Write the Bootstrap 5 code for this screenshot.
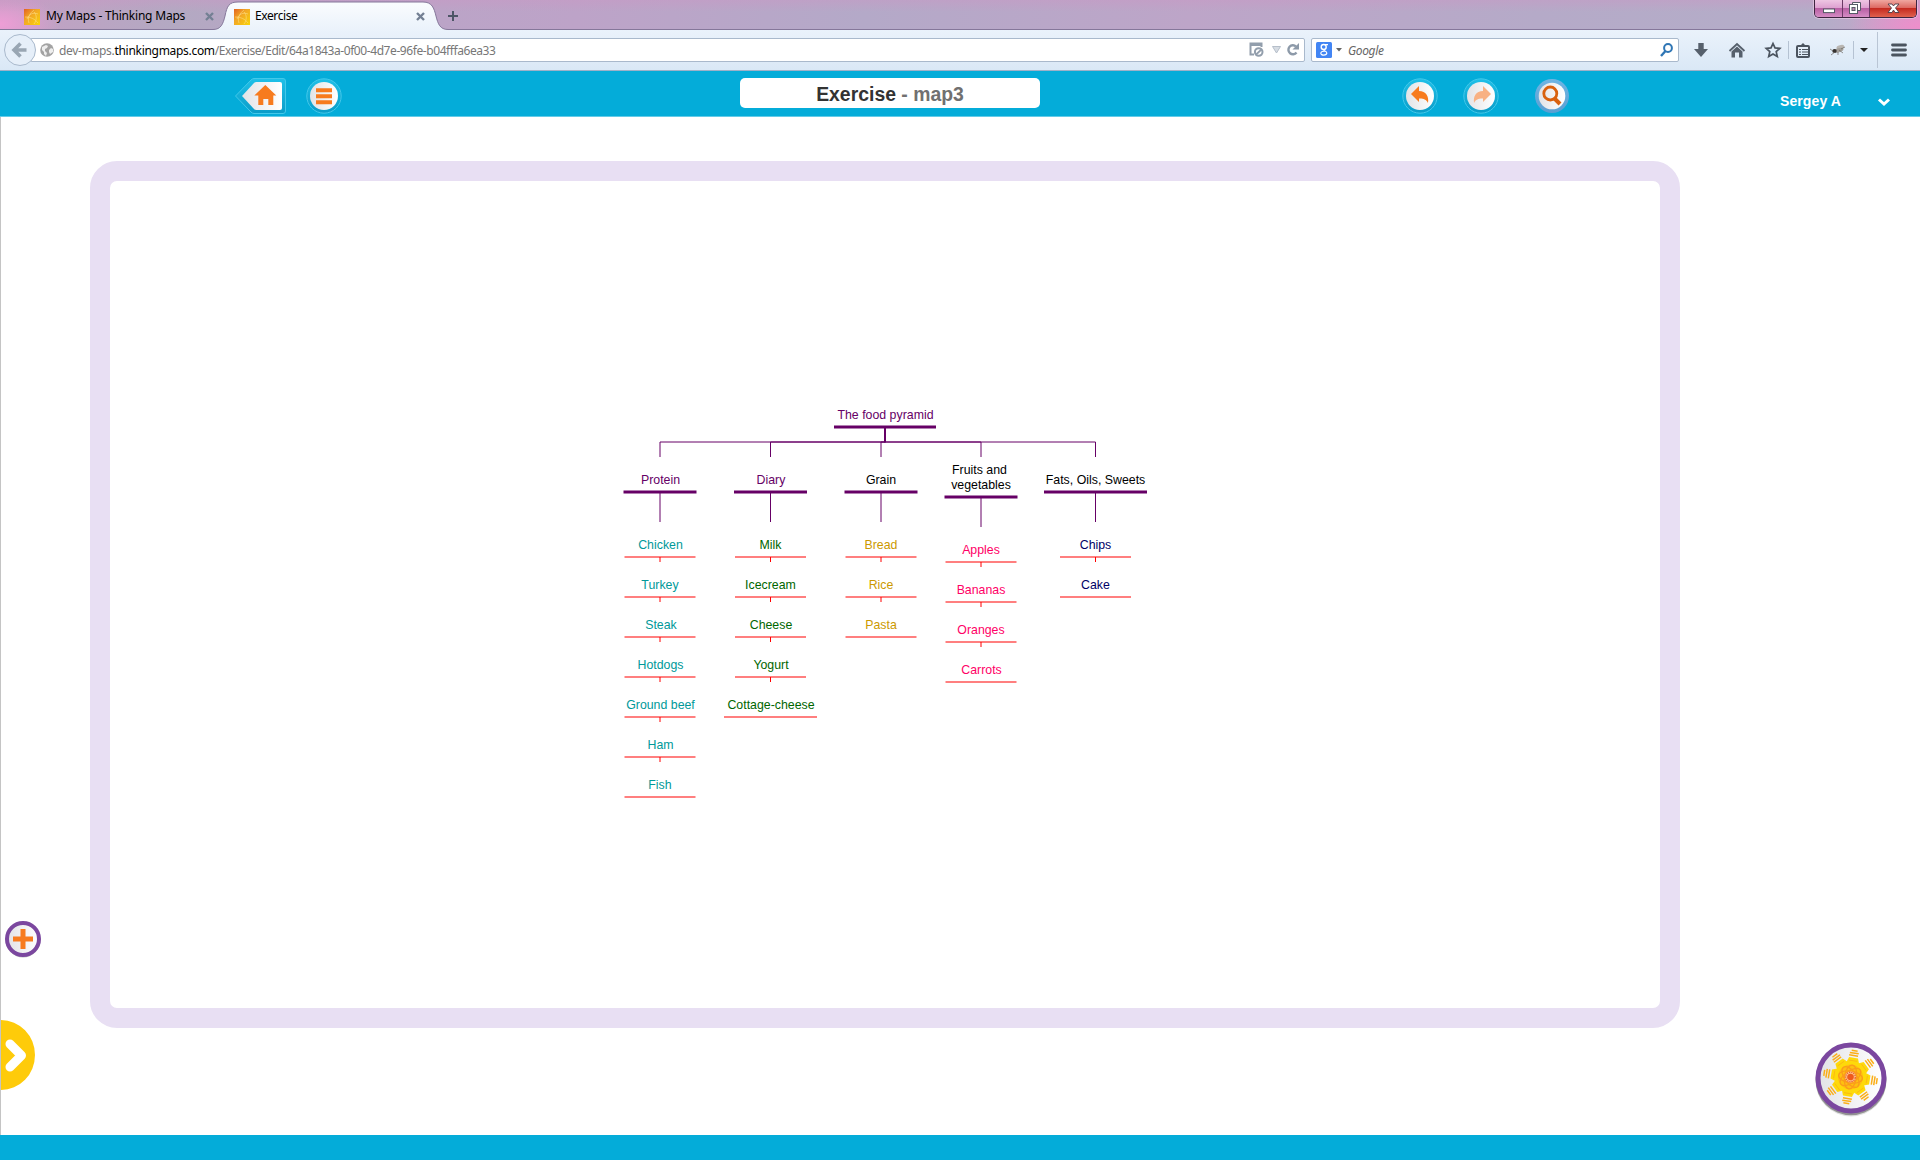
<!DOCTYPE html>
<html lang="en">
<head>
<meta charset="utf-8">
<title>Exercise</title>
<link href="https://cdn.jsdelivr.net/npm/bootstrap@5.3.0/dist/css/bootstrap.min.css" rel="stylesheet">
<script src="https://cdn.jsdelivr.net/npm/bootstrap@5.3.0/dist/js/bootstrap.bundle.min.js"></script>
<style>
body{width:1920px;height:1160px;overflow:hidden;background:#fff;font-family:"Liberation Sans",sans-serif;line-height:1}
svg{display:block;flex:none;overflow:visible}
.ui-font{font-family:"Noto Sans","Open Sans",sans-serif;font-size:12px;white-space:nowrap;color:#000}
.tabstrip{height:30px;background:
 radial-gradient(ellipse 60px 30px at 0 24px,#ee9ed6 0,#ee9ed600 100%),
 radial-gradient(ellipse 70px 28px at 1920px 26px,#ee8ecb 0,#ee8ecb00 100%),
 linear-gradient(90deg,#c49fc4 0,#b3a9c2 9%,#b9a5c6 16%,#bda3c8 30%,#b4a9c8 45%,#bda5c8 62%,#b5aac8 80%,#b4adc8 95%,#cf9fca 100%);border-bottom:1px solid #85779a}
.tabstrip .shade{left:0;top:0;width:1920px;height:12px;background:linear-gradient(#c998c477,#c998c400)}
.tab-off{width:190px;padding-left:24px;height:30px}
.tab-on{width:233px;padding-left:11px;height:30px}
.wctl{width:103px;height:18px;border:1px solid #3e2540;border-top:0;border-radius:0 0 5px 5px;overflow:hidden;margin-right:3px;align-self:flex-start;box-shadow:0 0 0 1px #f4d3ec88}
.wctl div{background:linear-gradient(#eec6e3 0,#dd9fd0 48%,#b860a4 50%,#d58cc4 100%);border-right:1px solid #6b3a66}
.wctl .wx{background:linear-gradient(#f0a7a0 0,#dd6a62 45%,#c52b20 50%,#e0614e 100%);border:0}
.toolbar{height:41px;background:linear-gradient(#eaf2fb,#dae8f6);border-bottom:1px solid #9fb1c8}
.field{height:24px;background:#fff;border:1px solid #a9b9cc;border-radius:2px}
.urlf{width:1275px;margin-left:30px}
.srchf{width:368px;margin-left:6px}
.url{margin-left:5px;padding-top:2px;letter-spacing:-.42px}
.url .host{letter-spacing:-.3px}
.backbtn{left:4px;top:34px}
.sep{width:1px;height:18px;background:#b5c2d2}
.sep-tall{width:1px;height:36px;background:#b9c5d4}
.grey{color:#777}
.appbar{height:46px;background:#04acd9;border-bottom:1px solid #63cbe8}
.title-box{width:300px;height:30px;background:#fff;border-radius:5px;margin-top:7px;font-size:19.4px;font-weight:bold;color:#333;line-height:32px}
.title-box span{color:#707070}
.who{font-size:14px;font-weight:bold;color:#fff;margin-top:15px;letter-spacing:.1px;line-height:30px}
.stage{border-left:1px solid #c4c4c4}
.board{width:1590px;height:867px;margin:44px 0 0 89px;border:20px solid #e8dff3;border-radius:27px}
.addbtn{left:4px;top:802px}
.drawer{left:0;top:902px}
.flower{left:1811px;top:923px}
.foot{height:25px;background:#04acd9}
.tree text{font-size:12.35px;text-anchor:middle;font-family:"Liberation Sans",sans-serif}
.trunk{fill:none;stroke:#606;stroke-width:1}
.bar3{stroke:#606;stroke-width:3.2}
.leaf{fill:none;stroke:#f00;stroke-width:1.2}
.tick{fill:none;stroke:#f00;stroke-width:1}
</style>
</head>
<body class="d-flex flex-column">
<svg width="0" height="0" class="position-absolute">
 <defs>
  <linearGradient id="btnw" x1="0" x2="1"><stop offset="0" stop-color="#e2e3e6"/><stop offset="1" stop-color="#fff"/></linearGradient>
  <linearGradient id="ring" x1="0" y1="0" x2="0" y2="1"><stop offset="0" stop-color="#1fc0e8"/><stop offset="1" stop-color="#0a9cc8"/></linearGradient>
  <linearGradient id="sring" x1="0" y1="0" x2="0" y2="1"><stop offset="0" stop-color="#6fb5e4"/><stop offset="1" stop-color="#5a9fd2"/></linearGradient>
  <linearGradient id="tabg" x1="0" y1="0" x2="0" y2="1"><stop offset="0" stop-color="#fafcfe"/><stop offset="1" stop-color="#eaf2fb"/></linearGradient>
  <linearGradient id="fav" x1="0" y1="0" x2="1" y2="1"><stop offset="0" stop-color="#e2621f"/><stop offset=".4" stop-color="#f2a626"/><stop offset="1" stop-color="#f9d408"/></linearGradient>
  <g id="favicon"><rect width="16" height="16" fill="url(#fav)"/><path d="M3 10C5 5 9 3 14 5M5 14C3 9 6 4 10 1M1 8c6 0 10 2 13 6M10 3c3 3 3 8 0 12" fill="none" stroke="#fde08a" stroke-width=".7" opacity=".8"/></g>
  <path id="cross" d="M1 1l7 7M8 1l-7 7" stroke="#748094" stroke-width="2.4"/>
 </defs>
</svg>

<div class="tabstrip d-flex position-relative flex-shrink-0">
 <div class="shade position-absolute"></div>
 <svg class="position-absolute start-0 top-0" width="460" height="31"><path d="M213 29.5C221 29.5 223 24 225 16C227 6 229 2 238 2H423C432 2 434 8 436 16C438 24 440 29.5 448 29.5V31H213Z" fill="url(#tabg)"/><path d="M213 29.5C221 29.5 223 24 225 16C227 6 229 2 238 2H423C432 2 434 8 436 16C438 24 440 29.5 448 29.5" fill="none" stroke="#85779a"/></svg>
 <div class="tab-off ui-font d-flex align-items-center position-relative">
  <svg width="16" height="16" style="margin-top:3px"><use href="#favicon"/></svg><span style="margin-left:6px;padding-top:2px;letter-spacing:-.2px">My Maps - Thinking Maps</span>
 </div>
 <svg width="9" height="9" class="position-relative" style="margin:12px 0 0 15px"><use href="#cross"/></svg>
 <div class="tab-on ui-font d-flex align-items-center position-relative" style="margin-left:9px">
  <svg width="16" height="16" style="margin-top:3px"><use href="#favicon"/></svg><span style="margin-left:5px;padding-top:2px;letter-spacing:-.4px">Exercise</span>
  <svg width="9" height="9" style="margin:2px 31px 0 auto"><use href="#cross"/></svg>
 </div>
 <svg width="11" height="11" class="position-relative" style="margin:11px 0 0 -8px"><path d="M5 0v10M0 5h10" stroke="#4d5566" stroke-width="2"/></svg>
 <div class="wctl d-flex ms-auto position-relative">
  <div style="width:28px"><svg width="27" height="17"><rect x="8.500" y="9" width="11" height="3.600" fill="#fff" stroke="#555a66"/></svg></div>
  <div style="width:27px"><svg width="26" height="17"><path d="M9.500 2.500h8v8h-2.500M9.500 2.500v2" fill="#fff" stroke="#555a66"/><rect x="6.500" y="4.500" width="8" height="9" fill="#fff" stroke="#555a66"/><rect x="9" y="7.500" width="3" height="3" fill="#b988b3" stroke="#555a66"/></svg></div>
  <div class="wx flex-grow-1"><svg width="46" height="17"><path d="M18 4h4l1.500 2L25 4h4l-3.500 4 3.500 4.500h-4L23.500 10 22 12.500h-4L21.500 8z" fill="#fff" stroke="#4d3d48" stroke-width=".9"/></svg></div>
 </div>
</div>

<div class="toolbar d-flex align-items-center flex-shrink-0">
 <svg class="backbtn position-absolute" width="32" height="32"><circle cx="16" cy="16" r="15.500" fill="#e6eff9" stroke="#a9b9cc"/><path d="M22.500 16H11M16.500 9.500L10 16l6.500 6.500" fill="none" stroke="#99a6b3" stroke-width="3.600"/></svg>
 <div class="field urlf ui-font d-flex align-items-center" style="padding-left:9px">
  <svg width="14" height="14"><circle cx="7" cy="7" r="6.800" fill="#a3a3a3"/><path d="M2 4l4-2 2 1-1 2-2 1v2l2 2-1 3-2-2V9L2 7zM9 7l2-2 2 1v3l-3 2-1-2z" fill="#eee"/></svg>
  <span class="grey url"><span class="host">dev-maps.<span class="text-black">thinkingmaps.com</span></span>/Exercise/Edit/64a1843a-0f00-4d7e-96fe-b04fffa6ea33</span>
  <svg width="55" height="16" class="ms-auto"><path d="M5 12.500H1.500V1.500h11V5" fill="none" stroke="#929eac" stroke-width="2"/><rect x="1" y="1" width="12" height="3" fill="#929eac"/><circle cx="9.700" cy="10" r="3.800" fill="#fff" stroke="#929eac" stroke-width="2"/><path d="M7 12.500l5.500-5" stroke="#929eac" stroke-width="1.700"/><path d="M23.500 4.500h8L27.500 11z" fill="#d6dce3" stroke="#b6bfca"/><path d="M47.500 10.500A4.500 4.500 0 1 1 47 4.500" fill="none" stroke="#8d9aa9" stroke-width="2.400"/><path d="M50 1v6.500H43.500z" fill="#8d9aa9"/></svg>
 </div>
 <div class="field srchf ui-font d-flex align-items-center" style="padding:0 5px 0 4px">
  <svg width="16" height="16"><rect width="16" height="16" rx="1.500" fill="#4285f4"/><g fill="none" stroke="#fff"><circle cx="7.700" cy="5" r="2.500" stroke-width="1.400"/><path d="M9 2.700h3M8.500 7.500c-2 1.200 2.500 1.500 2.300 3.600-.2 2.600-6 2.600-6 .2C4.800 9.500 7 9 9 9.200" stroke-width="1.200"/></g></svg>
  <svg width="6" height="4" style="margin-left:4px"><path d="M0 0h6L3 3.500z" fill="#666"/></svg>
  <em style="margin-left:6px;padding-top:2px;color:#666;letter-spacing:-.35px">Google</em>
  <svg width="13" height="14" class="ms-auto"><circle cx="8" cy="5" r="3.900" fill="none" stroke="#2f76b5" stroke-width="2"/><path d="M5.500 8L1 13" stroke="#2f76b5" stroke-width="2.400"/></svg>
 </div>
 <svg width="14" height="14" style="margin-left:15px"><path d="M4.300 0h5.400v6H14l-7 8-7-8h4.300z" fill="#56606c"/></svg>
 <svg width="16" height="15" style="margin-left:21px"><path d="M.5 8L8 1l7.500 7" fill="none" stroke="#56606c" stroke-width="1.800"/><path d="M8 3.500l5.500 5V14.500H10V9.500H6v5H2.500v-6z" fill="#56606c"/></svg>
 <svg width="16" height="16" style="margin-left:20px"><path d="M8 1.500l2 4.400 4.800.5-3.600 3.200 1.100 4.900L8 12l-4.300 2.500 1.100-4.900L1.200 6.400 6 5.900z" fill="none" stroke="#4b545f" stroke-width="1.700"/></svg>
 <div class="sep" style="margin-left:7px"></div>
 <svg width="14" height="15" style="margin-left:7px"><rect x="1" y="3" width="12" height="11" rx="1" fill="none" stroke="#4b545f" stroke-width="2"/><path d="M4 3L7 0l3 3z" fill="#4b545f"/><path d="M3 6.500h2m1 0h6M3 9h2m1 0h6M3 11.500h2m1 0h6" stroke="#4b545f" stroke-width="1.200"/></svg>
 <svg width="16" height="13" style="margin-left:20px"><ellipse cx="10.500" cy="3.500" rx="4" ry="2.200" fill="#b9b6b2" transform="rotate(-15 9.500 4)"/><ellipse cx="9" cy="6.500" rx="5" ry="2" fill="#a39f9a" transform="rotate(-15 8 8)"/><ellipse cx="4.500" cy="7" rx="2.200" ry="2" fill="#33302e"/><path d="M0 5l3 2M1 11l4-3M8 11l0-3M13 9l-4-3M11 5l4-2" stroke="#6a6662" stroke-width=".7"/></svg>
 <div class="sep" style="margin-left:7px"></div>
 <svg width="8" height="4" style="margin-left:6px"><path d="M0 0h8L4 4z" fill="#222"/></svg>
 <div class="sep-tall" style="margin-left:9px"></div>
 <svg width="16" height="14" style="margin-left:13px"><path d="M1.500 2h13M1.500 7h13M1.500 12h13" stroke="#4b545f" stroke-width="2.800" stroke-linecap="round"/></svg>
</div>

<div class="appbar d-flex flex-shrink-0">
 <svg width="52" height="37" style="margin:7px 0 0 235px"><path d="M.5 18L16 2Q17.500.5 19 .5H48Q50.500.5 50.500 3V33Q50.500 35.500 48 35.500H19Q17.500 35.500 16 34Z" fill="url(#ring)" stroke="#43c8ea"/><path d="M7 18L19 5Q20 4 21.500 4H45Q47 4 47 6V30Q47 32 45 32H21.500Q20 32 19 31Z" fill="url(#btnw)"/><path d="M31 7l11 10.500h-3V27h-5v-6h-5v6h-5V17.500h-4z" transform="translate(-.7,0)" fill="#f77b1e"/></svg>
 <svg width="36" height="36" style="margin:7px 0 0 19px"><circle cx="18" cy="18" r="17.200" fill="url(#ring)" stroke="#43c8ea"/><circle cx="18" cy="18" r="14" fill="url(#btnw)"/><path d="M10 12.200h16M10 18.200h16M10 24.200h16" stroke="#f77b1e" stroke-width="4"/></svg>
 <div class="title-box text-center" style="margin-left:398px">Exercise <span>- map3</span></div>
 <svg width="36" height="36" style="margin:7px 0 0 362px"><circle cx="18" cy="18" r="17.200" fill="url(#ring)" stroke="#43c8ea"/><circle cx="18" cy="18" r="14" fill="url(#btnw)"/><path d="M9 16l8-8v5c7 .3 10 5 9 12-2-4-5-4.700-9-4.500V24z" fill="#f77b1e"/></svg>
 <svg width="36" height="36" style="margin:7px 0 0 25px"><circle cx="18" cy="18" r="17.200" fill="url(#ring)" stroke="#43c8ea"/><circle cx="18" cy="18" r="14" fill="url(#btnw)"/><path d="M28 16l-8-8v5c-7 .3-10 5-9 12 2-4 5-4.700 9-4.500V24z" fill="#f8b183"/></svg>
 <svg width="36" height="36" style="margin:7px 0 0 35px"><circle cx="18" cy="18" r="17" fill="url(#sring)"/><circle cx="18" cy="18" r="13.300" fill="url(#btnw)"/><circle cx="16.300" cy="15.500" r="6.500" fill="none" stroke="#d9610f" stroke-width="2.800"/><path d="M20.500 20.500l5.500 5.500" stroke="#d9610f" stroke-width="4"/></svg>
 <div class="who text-nowrap" style="margin-left:210px">Sergey A</div>
 <svg width="12" height="8" style="margin:27px 0 0 37px"><path d="M1 1.500l5 4.500 5-4.500" fill="none" stroke="#fff" stroke-width="3"/></svg>
</div>

<main class="stage flex-grow-1 position-relative">
 <div class="board">
 <svg class="tree" width="1550" height="827" viewBox="110 181 1550 827">
  <g class="trunk"><path d="M885 442H660V457"/><path d="M885 442H770.500V457"/><path d="M885 442H881V457"/><path d="M885 442H981V457"/><path d="M885 442H1095.500V457"/>
   <path d="M660 492v30M770.500 492v30M881 492v30M981 497v30M1095.500 492v30"/><path d="M885 427v15.500" stroke-width="2"/></g>
  <path class="bar3" d="M834 427h102M623.500 492h73M734 492h73M844.500 492h73M944.500 497h73M1044 492h103"/>
  <path class="leaf" d="M624.500 557h71m-71 40h71m-71 40h71m-71 40h71m-71 40h71m-71 40h71m-71 40h71M735 557h71m-71 40h71m-71 40h71m-71 40h71M724 717h93M845.500 557h71m-71 40h71m-71 40h71M945.500 562h71m-71 40h71m-71 40h71m-71 40h71M1060 557h71m-71 40h71"/>
  <path class="tick" d="M660 557v5m0 35v5m0 35v5m0 35v5m0 35v5m0 35v5M770.500 557v5m0 35v5m0 35v5m0 35v5M881 557v5m0 35v5M981 562v5m0 35v5m0 35v5M1095.500 557v5"/>
  <g fill="#660066"><text x="885.500" y="419">The food pyramid</text><text x="660.500" y="484">Protein</text><text x="771" y="484">Diary</text></g>
  <g fill="#000"><text x="881" y="484">Grain</text><text x="979.500" y="474">Fruits and</text><text x="981" y="489">vegetables</text><text x="1095.500" y="484">Fats, Oils, Sweets</text></g>
  <g fill="#009999"><text x="660.500" y="549">Chicken</text><text x="660" y="589">Turkey</text><text x="661" y="629">Steak</text><text x="660.500" y="669">Hotdogs</text><text x="660.500" y="709">Ground beef</text><text x="660.500" y="749">Ham</text><text x="660" y="789">Fish</text></g>
  <g fill="#006600"><text x="770.500" y="549">Milk</text><text x="770.500" y="589">Icecream</text><text x="771" y="629">Cheese</text><text x="771" y="669">Yogurt</text><text x="771" y="709">Cottage-cheese</text></g>
  <g fill="#cc9900"><text x="881" y="549">Bread</text><text x="881" y="589">Rice</text><text x="881" y="629">Pasta</text></g>
  <g fill="#ff0066"><text x="981" y="554">Apples</text><text x="981" y="594">Bananas</text><text x="981" y="634">Oranges</text><text x="981.500" y="674">Carrots</text></g>
  <g fill="#000066"><text x="1095.500" y="549">Chips</text><text x="1095.500" y="589">Cake</text></g>
 </svg>
 </div>
 <svg class="addbtn position-absolute" width="38" height="40"><circle cx="18" cy="21" r="17.500" fill="#000" opacity=".25"/><circle cx="18" cy="20" r="16" fill="url(#btnw)" stroke="#7b479f" stroke-width="4"/><path d="M18 10v20M8 20h20" stroke="#f77b1e" stroke-width="5"/></svg>
 <svg class="drawer position-absolute" width="36" height="72"><path d="M0 1A34 35 0 0 1 0 71z" fill="#fecb0a"/><path d="M9 25L20.500 36.500 9 48" fill="none" stroke="#fff" stroke-width="9" stroke-linecap="round" stroke-linejoin="round"/></svg>
 <svg class="flower position-absolute" width="78" height="82"><defs><g id="petal"><path d="M-5.500-9L-6.500-14-4.500-19.500H4.500L6.500-14 5.500-9z" fill="#fed90a"/><path d="M-4-16.500h8" stroke="#fcb514" stroke-width=".8"/><path d="M-4.800-21.700h9M-4.500-24.200h9M-3-26.600h6" stroke="#fbae17" stroke-width="1.500"/></g></defs>
  <circle cx="39" cy="41" r="35.500" fill="#000" opacity=".12"/><circle cx="39" cy="39.800" r="35.500" fill="#000" opacity=".35"/><circle cx="39" cy="38" r="33" fill="url(#btnw)" stroke="#7b479f" stroke-width="5"/>
  <g transform="translate(38.500,37) rotate(9)"><use href="#petal"/><use href="#petal" transform="rotate(45)"/><use href="#petal" transform="rotate(90)"/><use href="#petal" transform="rotate(135)"/><use href="#petal" transform="rotate(180)"/><use href="#petal" transform="rotate(225)"/><use href="#petal" transform="rotate(270)"/><use href="#petal" transform="rotate(315)"/>
  <circle r="12.500" fill="#fdc010"/><g fill="none" stroke="#fb9b1b" stroke-width="1.200"><ellipse rx="12" ry="6"/><ellipse rx="12" ry="6" transform="rotate(45)"/><ellipse rx="12" ry="6" transform="rotate(90)"/><ellipse rx="12" ry="6" transform="rotate(135)"/></g><circle r="5.500" fill="#fbc58a"/><circle r="4.800" fill="none" stroke="#e9532f" stroke-width="1.200" stroke-dasharray="1.200 1"/><circle r="3.300" fill="#f05a1c"/></g></svg>
</main>
<footer class="foot flex-shrink-0"></footer>
</body>
</html>
